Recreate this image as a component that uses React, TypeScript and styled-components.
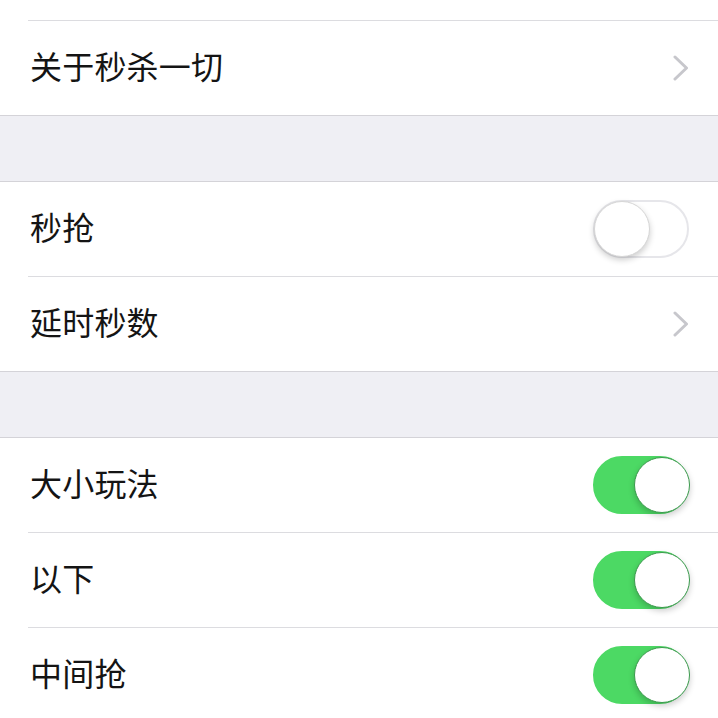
import styled, { createGlobalStyle } from 'styled-components';

const GlobalStyle = createGlobalStyle`
  html, body {
    margin: 0;
    padding: 0;
    background: #efeff4;
  }
  body {
    font-family: 'Noto Sans CJK SC', 'Noto Sans', sans-serif;
    -webkit-font-smoothing: antialiased;
  }
`;

type RowItem =
  | { label: string; kind: 'link' }
  | { label: string; kind: 'switch'; on: boolean };

const groups: RowItem[][] = [
  [
    { label: '秒抢', kind: 'switch', on: false },
    { label: '延时秒数', kind: 'link' },
  ],
  [
    { label: '大小玩法', kind: 'switch', on: true },
    { label: '以下', kind: 'switch', on: true },
    { label: '中间抢', kind: 'switch', on: true },
  ],
];

const Chevron = () => (
  <ChevronIcon viewBox="0 0 16 26" width="16" height="26">
    <path
      d="M2 2 L13.5 13 L2 24"
      fill="none"
      stroke="#c7c7cc"
      strokeWidth="3"
      strokeLinecap="round"
      strokeLinejoin="round"
    />
  </ChevronIcon>
);

const Row = ({ item }: { item: RowItem }) => (
  <RowWrap>
    <Label>{item.label}</Label>
    {item.kind === 'link' ? <Chevron /> : <Switch $on={item.on} />}
  </RowWrap>
);

const App = () => {
  return (
    <Page>
      <GlobalStyle />
      <Group $noTop>
        <TopStub />
        <Row item={{ label: '关于秒杀一切', kind: 'link' }} />
      </Group>
      {groups.map((rows, i) => (
        <div key={i}>
          <Gap />
          <Group>
            {rows.map((item) => (
              <Row key={item.label} item={item} />
            ))}
          </Group>
        </div>
      ))}
    </Page>
  );
};

const Page = styled.div`
  width: 718px;
  height: 718px;
  overflow: hidden;
  background: #efeff4;
`;

const Gap = styled.div`
  height: 65px;
  background: #efeff4;
`;

const Group = styled.div<{ $noTop?: boolean }>`
  background: #fff;
  border-top: ${({ $noTop }) => ($noTop ? 'none' : '1px solid #d4d3d8')};
  border-bottom: 1px solid #d4d3d8;
`;

const TopStub = styled.div`
  height: 20px;
  margin-left: 28px;
  border-bottom: 1px solid #dcdce0;
`;

const RowWrap = styled.div`
  position: relative;
  height: 94px;
  display: flex;
  align-items: center;
  justify-content: space-between;
  padding: 0 29px 0 30px;

  & + & {
    border-top: 1px solid #dcdce0;
    margin-left: 28px;
    padding-left: 2px;
  }
`;

const Label = styled.span`
  font-size: 32px;
  font-weight: 400;
  color: #141414;
  letter-spacing: 0.2px;
  padding-bottom: 6px;
`;

const ChevronIcon = styled.svg`
  display: block;
`;

const Switch = styled.span<{ $on: boolean }>`
  position: relative;
  display: block;
  width: 96px;
  height: 58px;
  box-sizing: border-box;
  border-radius: 29px;
  background: ${({ $on }) => ($on ? '#4cd964' : '#fff')};
  border: 2px solid ${({ $on }) => ($on ? '#4cd964' : '#e6e6ea')};

  &::after {
    content: '';
    position: absolute;
    top: -1px;
    left: ${({ $on }) => ($on ? '39px' : '-1px')};
    width: 56px;
    height: 56px;
    border-radius: 50%;
    background: #fff;
    box-sizing: border-box;
    border: 1px solid ${({ $on }) => ($on ? '#3a9a4c' : '#d6d6d6')};
    box-shadow: 0 3px 6px rgba(0, 0, 0, 0.2);
  }
`;

export default App;
